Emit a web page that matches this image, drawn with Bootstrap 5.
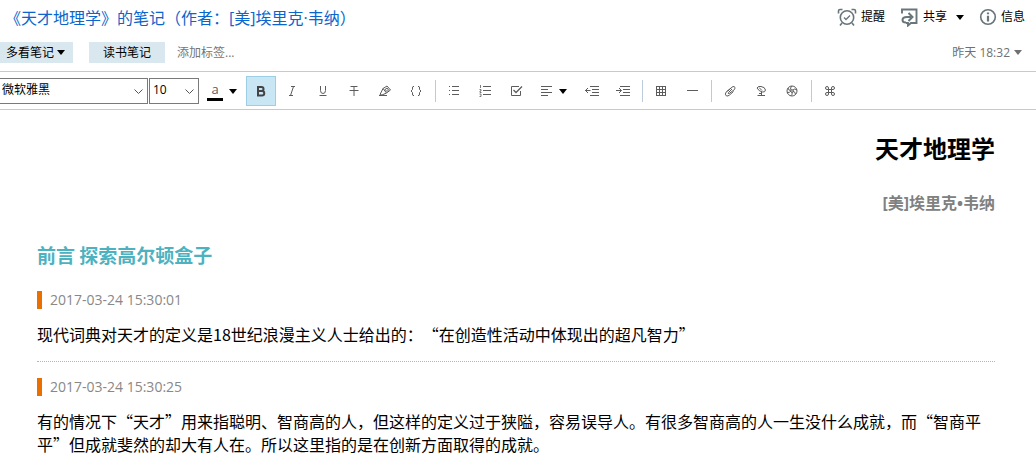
<!DOCTYPE html>
<html lang="zh-CN">
<head>
<meta charset="utf-8">
<meta name="viewport" content="width=device-width, initial-scale=1">
<title>《天才地理学》的笔记</title>
<link href="https://cdn.jsdelivr.net/npm/bootstrap@5.3.0/dist/css/bootstrap.min.css" rel="stylesheet">
<style>
  body { font-family: "Open Sans", "Noto Sans CJK SC", sans-serif; font-size: 12px; line-height: 20px; color: #000; background: #fff; text-spacing-trim: space-all; }
  svg { display: block; fill: none; stroke: currentColor; }
  .caret { width: 0; height: 0; border: 4px solid transparent; border-top: 5px solid currentColor; border-bottom: 0; }
  .note-title { font-size: 16px; line-height: 24px; color: #0a66cc; font-weight: 400; }
  .plain-btn { background: none; border: 0; padding: 0; color: #000; display: flex; align-items: center; }
  .plain-btn svg { color: #68757b; }
  .head-row { padding: 6px 11px 0 5px; height: 36px; }
  .head-actions { gap: 15px; padding-top: 1px; }
  .head-actions .caret { margin-left: 5px; }
  .tag-row { height: 35px; padding: 6px 14px 8px 0; }
  .tag-btn { background: #d9e7ef; height: 21px; }
  .tag-menu { padding: 0 8px 0 6px; gap: 3px; }
  .tag-item { padding: 0 14px; }
  .tag-input { border: 0; padding: 0; width: 120px; height: 21px; color: #757575; }
  .tag-input::placeholder { color: #757575; opacity: 1; }
  .date-btn { color: #707070; }
  .editbar { border-top: 1px solid #c9c9c9; border-bottom: 1px solid #c9c9c9; min-height: 39px; padding: 4px 0 3px; }
  .tool-select { font-size: 12px; line-height: 20px; height: 26px; border: 1px solid #7a7a7a; border-radius: 0; color: #000;
    padding: 0 20px 2px 2px; background-position: right 3px center; background-size: 11px 11px;
    background-image: url("data:image/svg+xml,%3csvg xmlns='http://www.w3.org/2000/svg' viewBox='0 0 11 11'%3e%3cpath fill='none' stroke='%23555' d='M1.5 3.500l4 4 4-4'/%3e%3c/svg%3e"); }
  .face { width: 149px; margin-left: -1px; }
  .size { width: 50px; padding-left: 3px; margin-left: 1px; }
  .tools { gap: 1px; }
  .tool { width: 30px; height: 30px; padding: 0; border: 1px solid transparent; background: none; color: #5c5c5c; display: flex; align-items: center; justify-content: center; }
  .tool.on { background: #c9e6f4; border-color: #9ccfe4; color: #444; }
  .tool-wide { width: 44px; gap: 6px; }
  .tool-color { width: 46px; gap: 6px; }
  .tool .caret { color: #000; }
  .swatch { border-bottom: 3px solid #000; width: 16px; font-size: 13px; line-height: 16px; height: 20px; text-align: center; }
  .divider { width: 1px; height: 22px; background: #bccbdc; margin: 0 2px 0 3px; }
  .page { padding: 20px 41px 0 37px; font-family: "Noto Sans CJK SC", sans-serif; }
  .book { font-size: 24px; line-height: 36px; font-weight: 700; margin: 0 0 25px; }
  .author { font-size: 16px; line-height: 24px; font-weight: 700; color: #808080; margin: 0 0 26px; font-family: "Open Sans", "Noto Sans CJK SC", sans-serif; }
  .chapter { font-size: 19px; line-height: 28px; font-weight: 700; color: #4db2bf; margin: 0 0 22px; }
  .stamp { display: block; border-left: 5px solid #eb6e00; padding-left: 8px; height: 18px; line-height: 18px; font-size: 14px; color: #888; font-family: "Open Sans", sans-serif; }
  .entry p { font-size: 16px; line-height: 23px; margin: 14px 0 0; }
  .entry + .entry { border-top: 1px dotted #b5b5b5; margin-top: 15px; padding-top: 16px; }
</style>
</head>
<body>
<header>
  <div class="head-row d-flex justify-content-between align-items-start">
    <h1 class="note-title m-0">《天才地理学》的笔记（作者：[美]埃里克·韦纳）</h1>
    <div class="head-actions d-flex align-items-center">
      <button class="plain-btn gap-1" type="button">
        <svg width="20" height="20" viewBox="0 0 20 20" stroke-width="1.6"><circle cx="10" cy="10.500" r="6.700"/><path d="M1.500 6.500V4q0-1.500 1.500-1.500H5.500M18.500 6.500V4q0-1.500-1.500-1.500H14.500M5 16L3 18.500M15 16l2 2.500"/><path d="M7 10.500l2 2 4-4" stroke-width="1.300"/></svg>
        <span>提醒</span>
      </button>
      <button class="plain-btn gap-1" type="button">
        <svg width="19" height="20" viewBox="0 0 19 20" stroke-width="1.900"><path d="M2 6.500V2.500H16.500V16H11L8 18.500V16H6"/><path d="M11 10H7q-4.500 0-4.500 3 0 2.500 3.500 2.500M8.500 6l4 4-4 4" stroke-width="2"/></svg>
        <span>共享</span>
        <span class="caret"></span>
      </button>
      <button class="plain-btn gap-1" type="button">
        <svg width="18" height="18" viewBox="0 0 18 18" stroke-width="1.600"><circle cx="9" cy="9" r="7.300"/><path d="M9 4.500V6.300M9 7.700V13.500" stroke-width="2.200"/></svg>
        <span>信息</span>
      </button>
    </div>
  </div>
  <div class="tag-row d-flex align-items-center">
    <button class="plain-btn tag-btn tag-menu" type="button"><span>多看笔记</span><span class="caret"></span></button>
    <button class="plain-btn tag-btn tag-item ms-3" type="button">读书笔记</button>
    <input class="tag-input ms-2 ps-1" type="text" aria-label="添加标签" placeholder="添加标签...">
    <button class="plain-btn date-btn ms-auto gap-1" type="button">昨天 18:32<span class="caret"></span></button>
  </div>
</header>
<div class="editbar d-flex flex-wrap align-items-center" role="toolbar" aria-label="格式">
  <select class="form-select tool-select face" aria-label="字体"><option>微软雅黑</option></select>
  <select class="form-select tool-select size" aria-label="字号"><option>10</option></select>
  <div class="tools d-flex flex-wrap align-items-center">
    <button class="tool tool-color" type="button" aria-label="文字颜色"><span class="swatch">a</span><span class="caret"></span></button>
    <button class="tool on" type="button" aria-label="粗体"><svg width="12" height="12" viewBox="0 0 12 12" stroke-width="2"><path d="M3 2H6.500a2 2 0 0 1 0 4H3M3 6H7a2 2 0 0 1 0 4.500H3V1"/></svg></button>
    <button class="tool" type="button" aria-label="斜体"><svg width="12" height="12" viewBox="0 0 12 12"><path d="M5 1.500H9M3 10.500H7M7.500 1.500L4.500 10.500"/></svg></button>
    <button class="tool" type="button" aria-label="下划线"><svg width="12" height="12" viewBox="0 0 12 12"><path d="M3.500 1V5.500a2.500 3 0 0 0 5 0V1M2.500 10.500H9.500"/></svg></button>
    <button class="tool" type="button" aria-label="删除线"><svg width="12" height="12" viewBox="0 0 12 12"><path d="M2.500 1.500H9.500M1.500 5.500H10.500M6 2V11"/></svg></button>
    <button class="tool" type="button" aria-label="高亮"><svg width="14" height="12" viewBox="0 0 14 12"><path d="M1 10.500H9M2 9.500L5 3.500 8.500 8 4 10zM5 3.500L9 1l3.500 4L8.500 8M7 4.500L9 3l1.500 2L9 6.500z"/></svg></button>
    <button class="tool" type="button" aria-label="代码"><svg width="12" height="12" viewBox="0 0 12 12"><path d="M4 1.500H3Q2.500 1.500 2.500 3V4.500L1 6l1.500 1.500V9q0 1.500.500 1.500H4M8 1.500H9q.500 0 .500 1.500V4.500L11 6 9.500 7.500V9q0 1.500-.500 1.500H8"/></svg></button>
    <span class="divider"></span>
    <button class="tool" type="button" aria-label="项目列表"><svg width="12" height="12" viewBox="0 0 12 12"><path d="M1 1.500H2M1 5.500H2M1 9.500H2M4 1.500H11M4 5.500H11M4 9.500H11"/></svg></button>
    <button class="tool" type="button" aria-label="编号列表"><svg width="12" height="12" viewBox="0 0 12 12"><path d="M4 1.500H12M4 5.500H12M4 9.500H12"/><path d="M1.500 0V3M.500 4.500H2V6H1V7.500H2.500M.500 9H2V11.500H.500" stroke-width=".8"/></svg></button>
    <button class="tool" type="button" aria-label="复选框"><svg width="13" height="12" viewBox="0 0 13 12"><path d="M9 1.500H1.500V10.500H10.500V6"/><path d="M3.500 5L6 7.500 12 1.500" stroke-width="1.300"/></svg></button>
    <button class="tool tool-wide" type="button" aria-label="对齐"><svg width="12" height="12" viewBox="0 0 12 12"><path d="M0 1.500H11M0 4.500H7M0 7.500H11M0 10.500H7"/></svg><span class="caret"></span></button>
    <button class="tool" type="button" aria-label="减少缩进"><svg width="14" height="12" viewBox="0 0 14 12"><path d="M5 1.500H14M7 4.500H14M7 7.500H14M5 10.500H14M0 5.500H5.500M3 3L.500 5.500 3 8"/></svg></button>
    <button class="tool" type="button" aria-label="增加缩进"><svg width="14" height="12" viewBox="0 0 14 12"><path d="M4 1.500H14M7 4.500H14M7 7.500H14M4 10.500H14M0 5.500H5.500M3 3L5.500 5.500 3 8"/></svg></button>
    <span class="divider"></span>
    <button class="tool" type="button" aria-label="表格"><svg width="12" height="12" viewBox="0 0 12 12"><path d="M1 1.500H11M1 4.500H11M1 7.500H11M1 10.500H11M1.500 1V11M4.500 1V11M7.500 1V11M10.500 1V11"/></svg></button>
    <button class="tool" type="button" aria-label="分隔线"><svg width="12" height="12" viewBox="0 0 12 12"><path d="M1 5.500H12"/></svg></button>
    <span class="divider"></span>
    <button class="tool" type="button" aria-label="附件"><svg width="12" height="12" viewBox="0 0 12 12"><path d="M8 4L4.500 7.500q-.8 1.500.7 1L10.500 4.500q1.500-3-1.500-3L2.500 6.500q-2.500 3 0 4.500 1.500.3 3-1L9.500 6.500M7 3L3.500 6.500"/></svg></button>
    <button class="tool" type="button" aria-label="网络摄像头"><svg width="12" height="12" viewBox="0 0 12 12"><path d="M2 3Q3 .8 6 1.500 10 2 10.500 5 10 7.500 7.500 7 4 6.500 2 3zM4 2.500L7 5.500M6.500 7V10M2.500 10.500H10M4 8.500H7"/></svg></button>
    <button class="tool" type="button" aria-label="图片"><svg width="12" height="12" viewBox="0 0 12 12"><circle cx="6" cy="6" r="5"/><circle cx="6" cy="6" r="1.300"/><path d="M6 1Q3.500 3 5 5M11 5Q8.500 3 7 5M9.500 9.500Q9.500 6.500 7 6.500M4.500 11Q7 9.500 6 7M1 7.500Q4 8 4.800 6M2 3Q2.500 5.500 4.500 5.500"/></svg></button>
    <span class="divider"></span>
    <button class="tool" type="button" aria-label="快捷命令"><svg width="12" height="12" viewBox="0 0 12 12"><path d="M4.500 4.500H7.500V7.500H4.500zM4.500 4.500H3A1.500 1.500 0 1 1 4.500 3zM7.500 4.500V3A1.500 1.500 0 1 1 9 4.500zM7.500 7.500H9A1.500 1.500 0 1 1 7.500 9zM4.500 7.500V9A1.500 1.500 0 1 1 3 7.500z"/></svg></button>
  </div>
</div>
<main class="page">
  <h2 class="book text-end">天才地理学</h2>
  <h3 class="author text-end">[美]埃里克•韦纳</h3>
  <h3 class="chapter">前言 探索高尔顿盒子</h3>
  <article class="entry">
    <time class="stamp">2017-03-24 15:30:01</time>
    <p>现代词典对天才的定义是18世纪浪漫主义人士给出的：“在创造性活动中体现出的超凡智力”</p>
  </article>
  <article class="entry">
    <time class="stamp">2017-03-24 15:30:25</time>
    <p>有的情况下“天才”用来指聪明、智商高的人，但这样的定义过于狭隘，容易误导人。有很多智商高的人一生没什么成就，而“智商平平”但成就斐然的却大有人在。所以这里指的是在创新方面取得的成就。</p>
  </article>
</main>
<script src="https://cdn.jsdelivr.net/npm/bootstrap@5.3.0/dist/js/bootstrap.bundle.min.js"></script>
</body>
</html>
